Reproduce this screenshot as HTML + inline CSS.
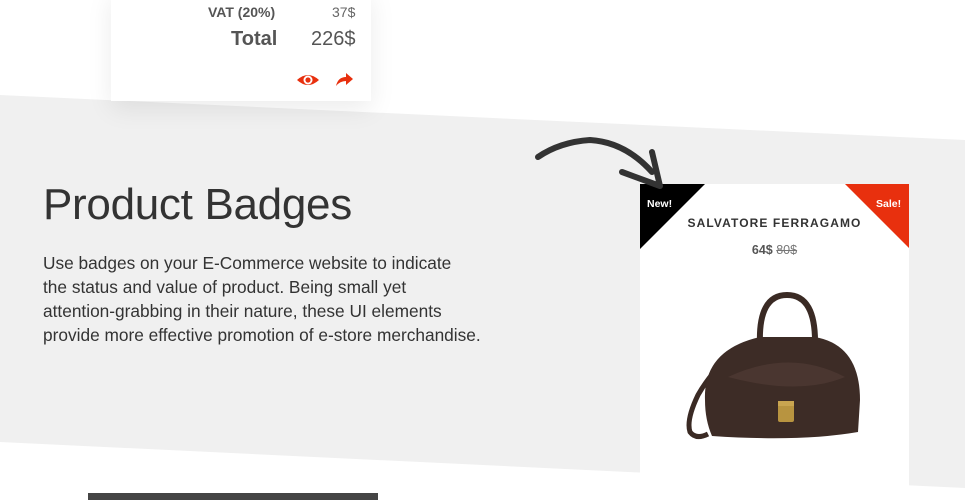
<!DOCTYPE html>
<html><head><meta charset="utf-8"><style>
html,body{margin:0;padding:0;width:965px;height:500px;overflow:hidden;background:#fff;font-family:"Liberation Sans",sans-serif;position:relative}
.abs{position:absolute}
</style></head><body>
<svg class="abs" style="left:0;top:0" width="965" height="500">
<polygon points="0,95 965,140 965,488 0,442" fill="#f0f0f0"/>
<rect x="88" y="493" width="290" height="7" fill="#454545"/>
</svg>
<div class="abs" style="left:111px;top:-10px;width:260px;height:111px;background:#fff;box-shadow:0 8px 24px rgba(0,0,0,0.08)"></div>
<div class="abs" style="left:208px;top:4px;font-size:14px;font-weight:bold;color:#555">VAT (20%)</div>
<div class="abs" style="left:332px;top:4px;font-size:14px;color:#666">37$</div>
<div class="abs" style="left:231px;top:28px;font-size:20px;font-weight:bold;color:#555">Total</div>
<div class="abs" style="left:311px;top:28px;font-size:20px;color:#555">226$</div>
<svg class="abs" style="left:296px;top:70px" width="60" height="20">
<path d="M1,10 Q12,0 23,10 Q12,20 1,10Z" fill="#e8300e"/><circle cx="12" cy="10" r="4.5" fill="#fff"/><circle cx="12" cy="10" r="2.6" fill="#e8300e"/>
<path d="M40,16 Q42,7 50,7 L50,3 L57,9 L50,15 L50,11 Q44,11 40,16Z" fill="#e8300e"/>
</svg>
<div class="abs" style="left:43px;top:180px;font-size:44px;color:#333;font-weight:300;letter-spacing:-0.3px">Product Badges</div>
<div class="abs" style="left:43px;top:251px;font-size:17.3px;line-height:24px;color:#333;width:480px">Use badges on your E-Commerce website to indicate<br>the status and value of product. Being small yet<br>attention-grabbing in their nature, these UI elements<br>provide more effective promotion of e-store merchandise.</div>
<div class="abs" style="left:640px;top:184px;width:269px;height:316px;background:#fff"></div>
<svg class="abs" style="left:0;top:0" width="965" height="500">
<polygon points="640,184 705,184 640,249" fill="#000"/>
<polygon points="845,184 909,184 909,248" fill="#e8300e"/>
<path d="M538,157 Q560,142 590,140 Q625,142 652,172" stroke="#333" stroke-width="6" fill="none" stroke-linecap="round"/>
<path d="M652,152 L660,186 L622,172" stroke="#333" stroke-width="6" fill="none" stroke-linecap="round" stroke-linejoin="round"/>
<!-- bag -->
<path d="M760,345 Q758,295 787,295 Q816,295 815,345" stroke="#3a2a24" stroke-width="6" fill="none"/>
<path d="M745,345 Q715,365 698,395 Q686,420 690,432 Q696,440 708,434" stroke="#3a2a24" stroke-width="5" fill="none"/>
<path d="M705,400 Q703,350 760,337 L815,337 Q860,345 860,400 L858,432 Q800,442 712,436 Q705,420 705,400Z" fill="#3d2c26"/>
<path d="M728,377 Q790,348 845,377 Q800,396 728,377Z" fill="#4a3630"/>
<rect x="778" y="404" width="16" height="18" rx="2" fill="#b89440"/>
<rect x="778" y="401" width="16" height="5" fill="#c9a550"/>
</svg>
<div class="abs" style="left:647px;top:198px;font-size:10.5px;font-weight:bold;color:#fff">New!</div>
<div class="abs" style="left:876px;top:198px;font-size:10.5px;font-weight:bold;color:#fff">Sale!</div>
<div class="abs" style="left:640px;top:216px;width:269px;text-align:center;font-size:12px;font-weight:bold;letter-spacing:1.1px;color:#333">SALVATORE FERRAGAMO</div>
<div class="abs" style="left:640px;top:243px;width:269px;text-align:center;font-size:12.5px;color:#555"><b>64$</b> <s style="color:#777">80$</s></div>
</body></html>
